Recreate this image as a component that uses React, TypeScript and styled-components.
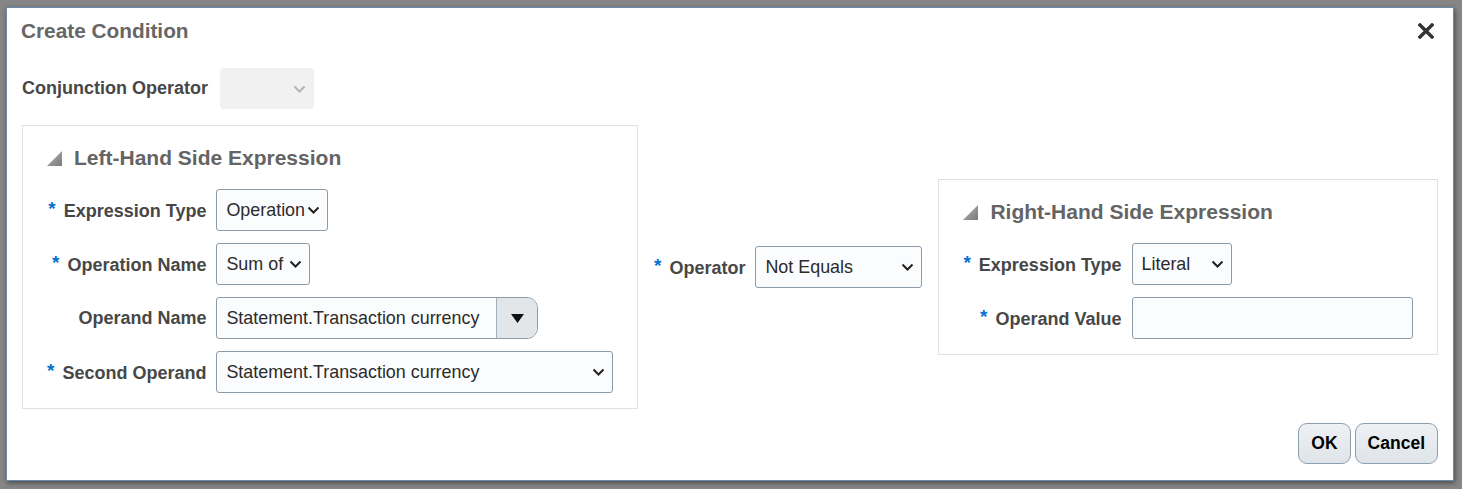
import React from 'react';
import styled, { createGlobalStyle } from 'styled-components';

const GlobalStyle = createGlobalStyle`
  html, body {
    margin: 0;
    padding: 0;
    background: #868686;
    font-family: "Liberation Sans", Arial, sans-serif;
  }
  * { box-sizing: border-box; }
`;

const Dialog = styled.div`
  margin: 7px 8px 7px 6px;
  background: #fff;
  border: 1px solid #6b89aa;
  box-shadow: 1px 2px 5px rgba(0, 0, 0, 0.45);
  display: flex;
  flex-direction: column;
  padding: 11px 19px 16px 15px;
`;

const Header = styled.div`
  display: flex;
  align-items: center;
  justify-content: space-between;
  height: 24px;
`;

const Title = styled.h1`
  margin: 0 0 0 -1px;
  font-size: 20.8px;
  line-height: 24px;
  font-weight: bold;
  color: #666;
`;

const CloseButton = styled.button`
  border: 0;
  background: none;
  padding: 0;
  width: 16px;
  height: 16px;
  display: flex;
  cursor: pointer;
`;

const ConjunctionRow = styled.div`
  display: flex;
  align-items: center;
  gap: 12px;
  margin-top: 25px;
  height: 41px;
`;

const Label = styled.span`
  font-size: 18px;
  font-weight: bold;
  color: #474747;
  white-space: nowrap;
`;

const Required = styled.span`
  color: #0572ce;
  font-size: 19px;
  margin-right: 8px;
  vertical-align: 0.12em;
`;

const DisabledSelect = styled.div`
  width: 94px;
  height: 41px;
  border-radius: 4px;
  background: #f1f1f1;
  display: flex;
  align-items: center;
  justify-content: flex-end;
  padding-right: 8px;
`;

const MainRow = styled.div`
  display: flex;
  align-items: center;
  gap: 16px;
  margin-top: 16px;
  margin-right: -4px;
`;

const Panel = styled.section<{ $width?: number }>`
  border: 1px solid #dce2e7;
  padding: 20px 24px 15px 24px;
  ${(p) => (p.$width ? `width: ${p.$width}px;` : 'flex: 1;')}
`;

const PanelHeading = styled.h2`
  margin: 0 0 19px 0;
  display: flex;
  align-items: center;
  gap: 12px;
  font-size: 21px;
  line-height: 24px;
  font-weight: bold;
  color: #646464;
`;

const FieldGrid = styled.div`
  display: grid;
  grid-template-columns: auto auto;
  column-gap: 10px;
  row-gap: 12px;
  justify-content: start;
  align-items: center;
`;

const FieldLabel = styled(Label)`
  justify-self: end;
`;

const Select = styled.div<{ $width: number }>`
  width: ${(p) => p.$width}px;
  height: 42px;
  border: 1px solid #8d9ba8;
  border-radius: 3px;
  background: #fbfcfd;
  display: flex;
  align-items: center;
  justify-content: space-between;
  padding: 0 7px 0 9px;
  font-size: 17.9px;
  color: #2b2b2b;
  white-space: nowrap;
`;

const TextInput = styled.div<{ $width: number }>`
  width: ${(p) => p.$width}px;
  height: 42px;
  border: 1px solid #8d9ba8;
  border-radius: 3px;
  background: #fbfcfd;
`;

const Combo = styled.div`
  width: 322px;
  height: 42px;
  border: 1px solid #8d9ba8;
  border-radius: 3px 11px 11px 3px;
  background: #fbfcfd;
  display: flex;
  overflow: hidden;
`;

const ComboText = styled.div`
  flex: 1;
  display: flex;
  align-items: center;
  padding-left: 9px;
  font-size: 17.9px;
  color: #2b2b2b;
  white-space: nowrap;
`;

const ComboButton = styled.div`
  width: 41px;
  background: #e3e6e9;
  border-left: 1px solid #a2afba;
  display: flex;
  align-items: center;
  justify-content: center;
`;

const OperatorGroup = styled.div`
  display: flex;
  align-items: center;
  gap: 10px;
`;

const Footer = styled.div`
  display: flex;
  justify-content: flex-end;
  gap: 4px;
  margin-top: 14px;
  margin-right: -4px;
`;

const Button = styled.button`
  height: 41px;
  padding: 0 12px;
  border: 1px solid #8c9fb1;
  border-radius: 9px;
  background: linear-gradient(#eef1f4, #dfe4e9);
  font-family: "Liberation Sans", Arial, sans-serif;
  font-size: 17.5px;
  font-weight: bold;
  color: #000;
  cursor: pointer;
`;

const Chevron = ({ color = '#222' }: { color?: string }) => (
  <svg width="13" height="8" viewBox="0 0 13 8">
    <polyline points="1.5,1.5 6.5,6.5 11.5,1.5" fill="none" stroke={color} strokeWidth="2" />
  </svg>
);

const Collapse = () => (
  <svg width="15" height="15" viewBox="0 0 15 15">
    <defs>
      <linearGradient id="tri" x1="0" y1="0" x2="1" y2="1">
        <stop offset="0" stopColor="#b5b5b5" />
        <stop offset="1" stopColor="#7a7a7a" />
      </linearGradient>
    </defs>
    <polygon points="15,0 15,15 0,15" fill="url(#tri)" />
  </svg>
);

const Field = ({ label, required, children }: { label: string; required?: boolean; children: React.ReactNode }) => (
  <>
    <FieldLabel>
      {required && <Required>*</Required>}
      {label}
    </FieldLabel>
    {children}
  </>
);

const DropSelect = ({ value, width }: { value: string; width: number }) => (
  <Select $width={width}>
    <span>{value}</span>
    <Chevron />
  </Select>
);

const App = () => (
  <>
    <GlobalStyle />
    <Dialog>
      <Header>
        <Title>Create Condition</Title>
        <CloseButton aria-label="Close">
          <svg width="16" height="16" viewBox="0 0 16 16">
            <path d="M2 2 L14 14 M14 2 L2 14" stroke="#333" strokeWidth="3.4" strokeLinecap="square" />
          </svg>
        </CloseButton>
      </Header>

      <ConjunctionRow>
        <Label>Conjunction Operator</Label>
        <DisabledSelect>
          <Chevron color="#b4b4b4" />
        </DisabledSelect>
      </ConjunctionRow>

      <MainRow>
        <Panel $width={616}>
          <PanelHeading>
            <Collapse />
            Left-Hand Side Expression
          </PanelHeading>
          <FieldGrid>
            <Field label="Expression Type" required>
              <DropSelect value="Operation" width={112} />
            </Field>
            <Field label="Operation Name" required>
              <DropSelect value="Sum of" width={94} />
            </Field>
            <Field label="Operand Name">
              <Combo>
                <ComboText>Statement.Transaction currency</ComboText>
                <ComboButton>
                  <svg width="13" height="9" viewBox="0 0 13 9">
                    <polygon points="0,0 13,0 6.5,9" fill="#111" />
                  </svg>
                </ComboButton>
              </Combo>
            </Field>
            <Field label="Second Operand" required>
              <DropSelect value="Statement.Transaction currency" width={397} />
            </Field>
          </FieldGrid>
        </Panel>

        <OperatorGroup>
          <Label>
            <Required>*</Required>Operator
          </Label>
          <DropSelect value="Not Equals" width={167} />
        </OperatorGroup>

        <Panel>
          <PanelHeading>
            <Collapse />
            Right-Hand Side Expression
          </PanelHeading>
          <FieldGrid>
            <Field label="Expression Type" required>
              <DropSelect value="Literal" width={100} />
            </Field>
            <Field label="Operand Value" required>
              <TextInput $width={281} />
            </Field>
          </FieldGrid>
        </Panel>
      </MainRow>

      <Footer>
        <Button>OK</Button>
        <Button>Cancel</Button>
      </Footer>
    </Dialog>
  </>
);

export default App;
